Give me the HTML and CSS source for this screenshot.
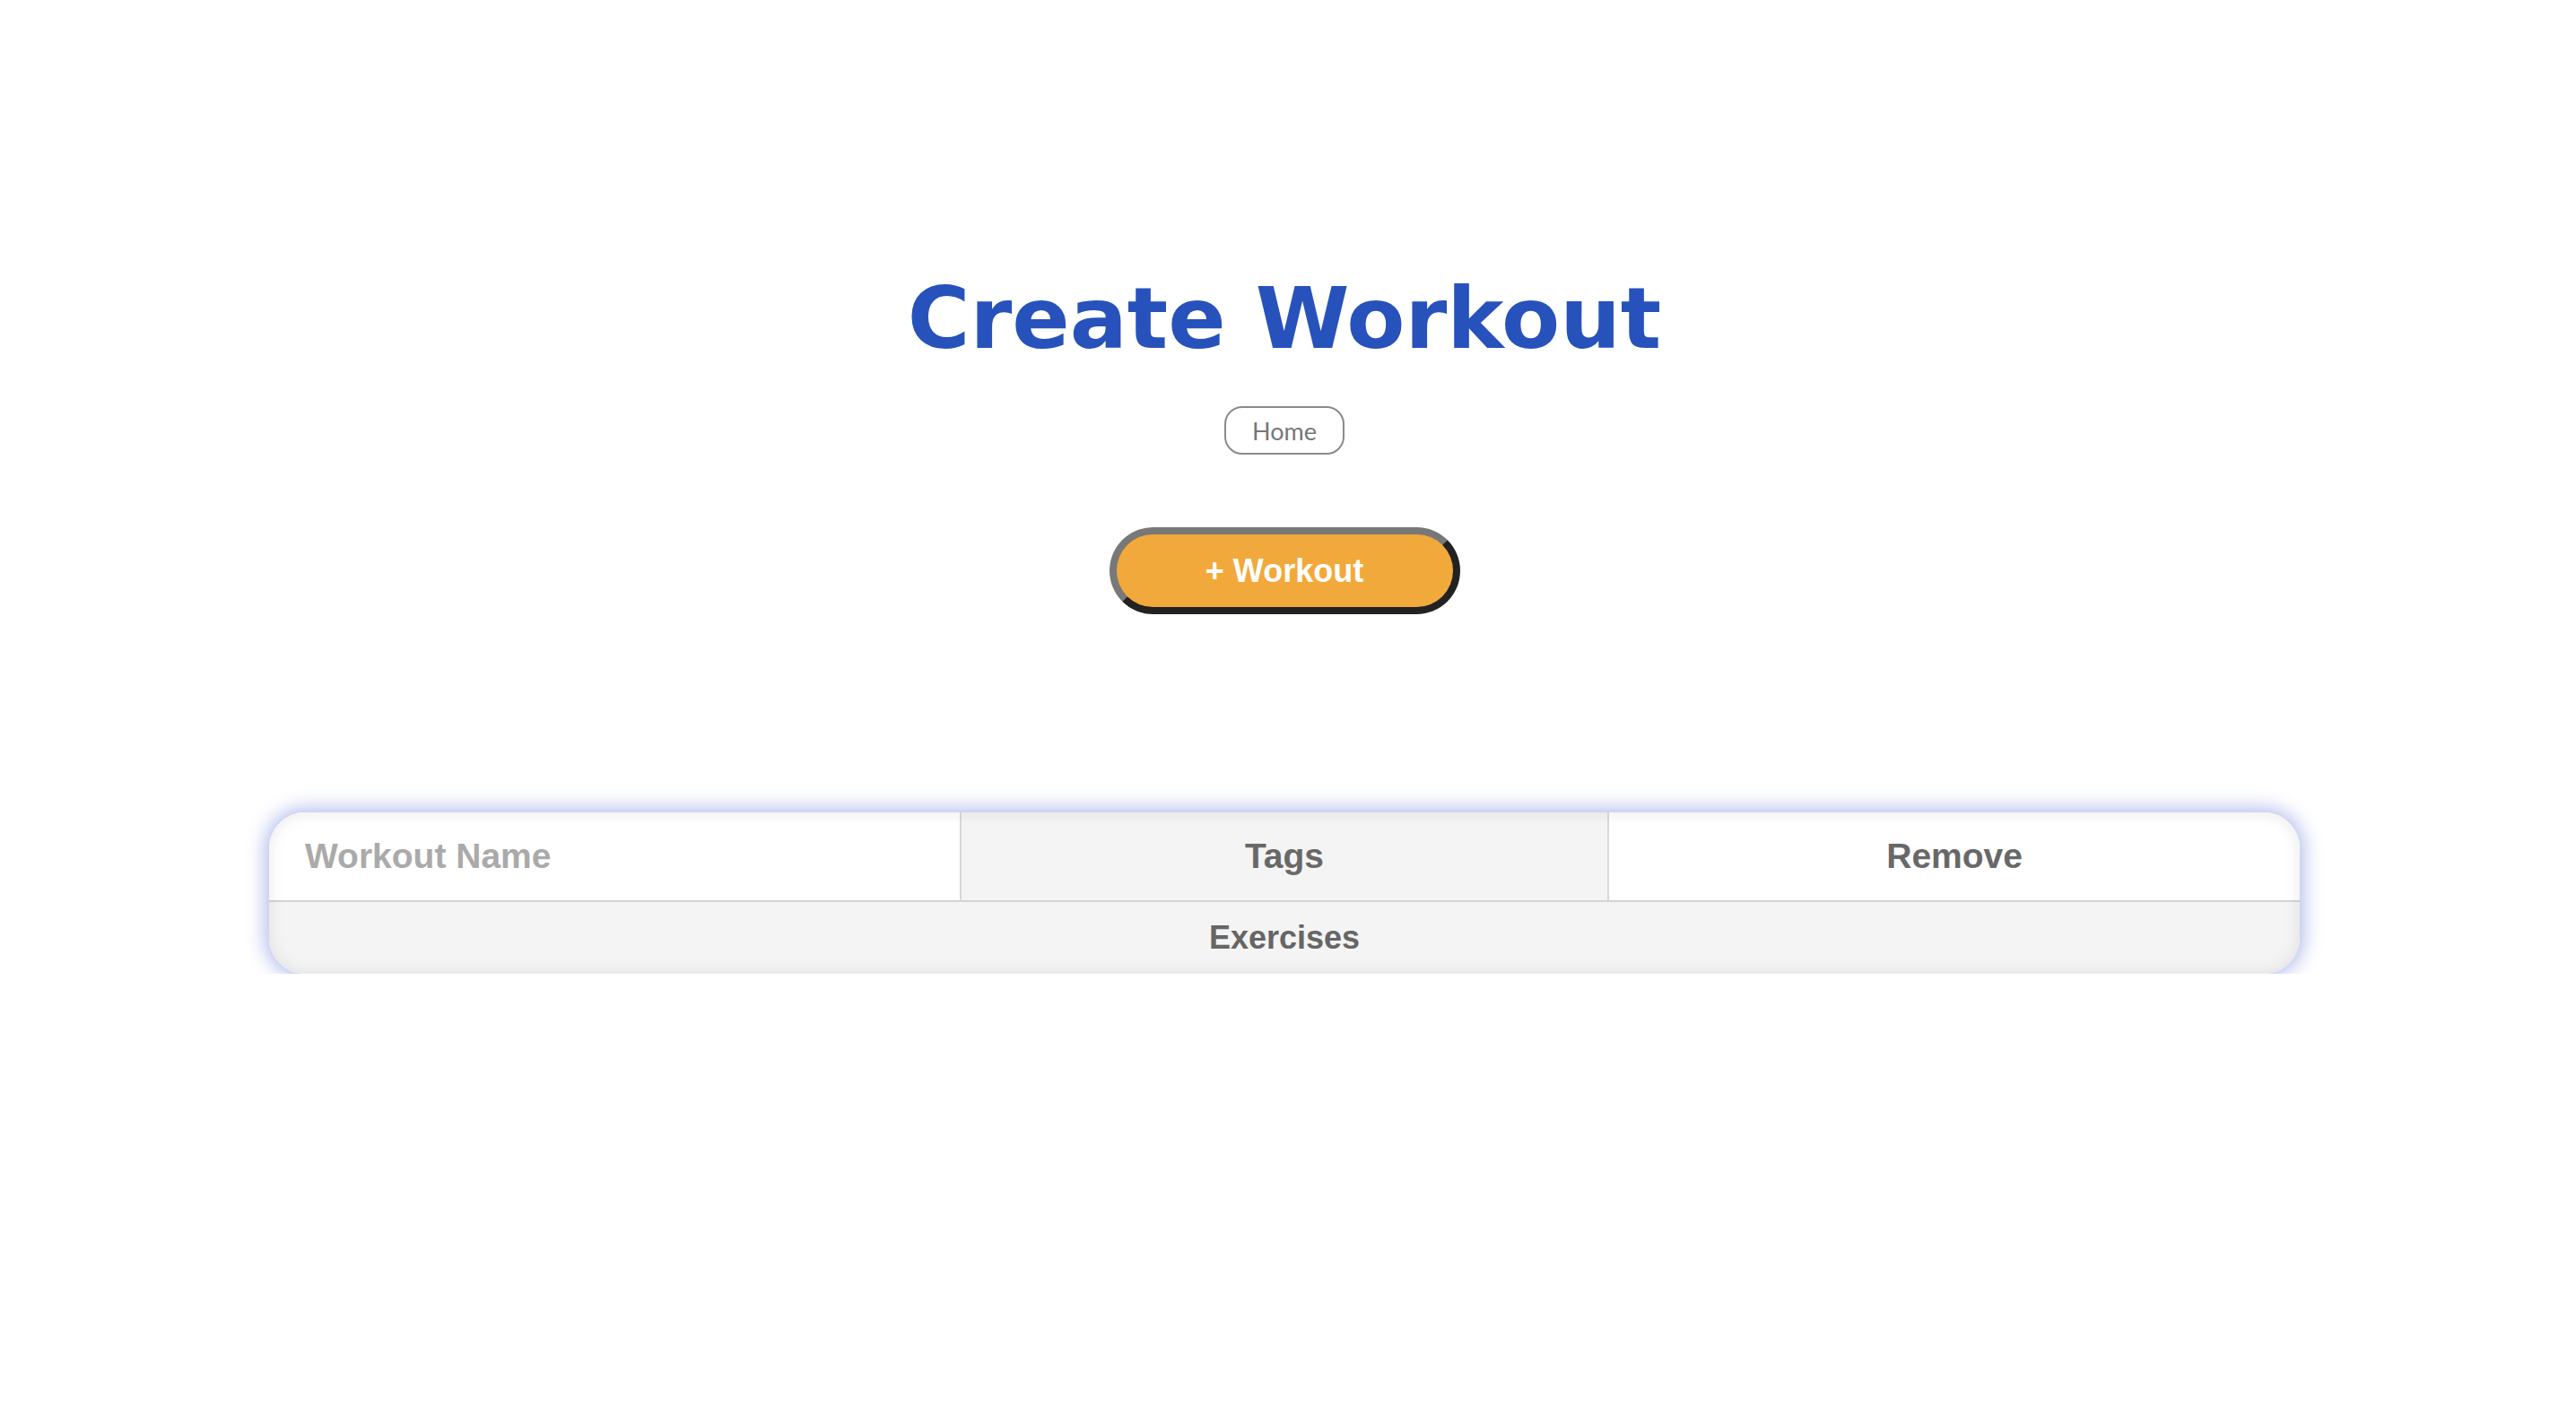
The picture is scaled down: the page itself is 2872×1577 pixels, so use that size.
FILE: index.html
```html
<!DOCTYPE html>
<html lang="en">
<head>
<meta charset="utf-8">
<title>Create Workout</title>
<link rel="stylesheet" href="styles.css">
</head>
<body>
<main class="page">
  <h1 class="title">Create Workout</h1>
  <a class="home" href="#">Home</a>
  <button class="add" type="button">+ Workout</button>
  <section class="workout">
    <div class="row head">
      <div class="cell name"><input class="name-input" type="text" placeholder="Workout Name"></div>
      <div class="cell tags">Tags</div>
      <div class="cell remove">Remove</div>
    </div>
    <div class="row exercises">Exercises</div>
  </section>
</main>
</body>
</html>
```
FILE: styles.css
```css
html, body {
  margin: 0;
  padding: 0;
  background: #ffffff;
}

.page {
  display: flex;
  flex-direction: column;
  align-items: center;
  padding: 300px 8px 0 0;
  font-family: "Liberation Sans", Arial, sans-serif;
}

.title {
  margin: 0;
  font-family: "DejaVu Sans", sans-serif;
  font-weight: 700;
  font-size: 95px;
  line-height: 110px;
  height: 110px;
  color: #2752bc;
  text-align: center;
}

.home {
  margin-top: 43px;
  box-sizing: border-box;
  width: 134px;
  height: 54px;
  border: 2px solid #8a8a8a;
  border-radius: 20px;
  display: flex;
  align-items: center;
  justify-content: center;
  font-family: "Lato", sans-serif;
  font-size: 27px;
  color: #777777;
  text-decoration: none;
}

.add {
  margin-top: 81px;
  box-sizing: border-box;
  width: 391px;
  height: 97px;
  border-width: 8px;
  border-style: solid;
  border-color: #787878 #222222 #222222 #787878;
  border-radius: 60px;
  background: #f2a93b;
  color: #ffffff;
  font-family: "Liberation Sans", Arial, sans-serif;
  font-weight: 700;
  font-size: 36px;
  padding: 0;
  cursor: pointer;
}

.workout {
  position: relative;
  margin-top: 221px;
  width: 2264px;
  border-radius: 40px;
  overflow: hidden;
  box-shadow: 0 0 20px 5px rgba(60, 90, 205, 0.38);
  background: #ffffff;
}

.workout::after {
  content: "";
  position: absolute;
  inset: 0;
  border-radius: 40px;
  box-shadow: inset 0 0 18px rgba(0, 0, 0, 0.09);
  pointer-events: none;
}

.row.head {
  display: grid;
  grid-template-columns: 34% 32% 34%;
  height: 98px;
  border-bottom: 2px solid #d4d4d4;
}

.cell {
  display: flex;
  align-items: center;
  justify-content: center;
  font-weight: 700;
  font-size: 39px;
  color: #686868;
}

.cell.name {
  justify-content: flex-start;
  background: #ffffff;
}

.name-input {
  width: 100%;
  height: 100%;
  box-sizing: border-box;
  border: none;
  outline: none;
  background: transparent;
  padding: 0 0 0 40px;
  font-family: "Liberation Sans", Arial, sans-serif;
  font-weight: 700;
  font-size: 39px;
  color: #686868;
}

.name-input::placeholder {
  color: #aaaaaa;
}

.cell.tags {
  background: #f4f4f4;
  border-left: 2px solid #d8d8d8;
  border-right: 2px solid #d8d8d8;
}

.cell.remove {
  background: #ffffff;
}

.row.exercises {
  height: 80px;
  display: flex;
  align-items: center;
  justify-content: center;
  background: #f4f4f4;
  font-weight: 700;
  font-size: 36px;
  color: #666666;
}
```
